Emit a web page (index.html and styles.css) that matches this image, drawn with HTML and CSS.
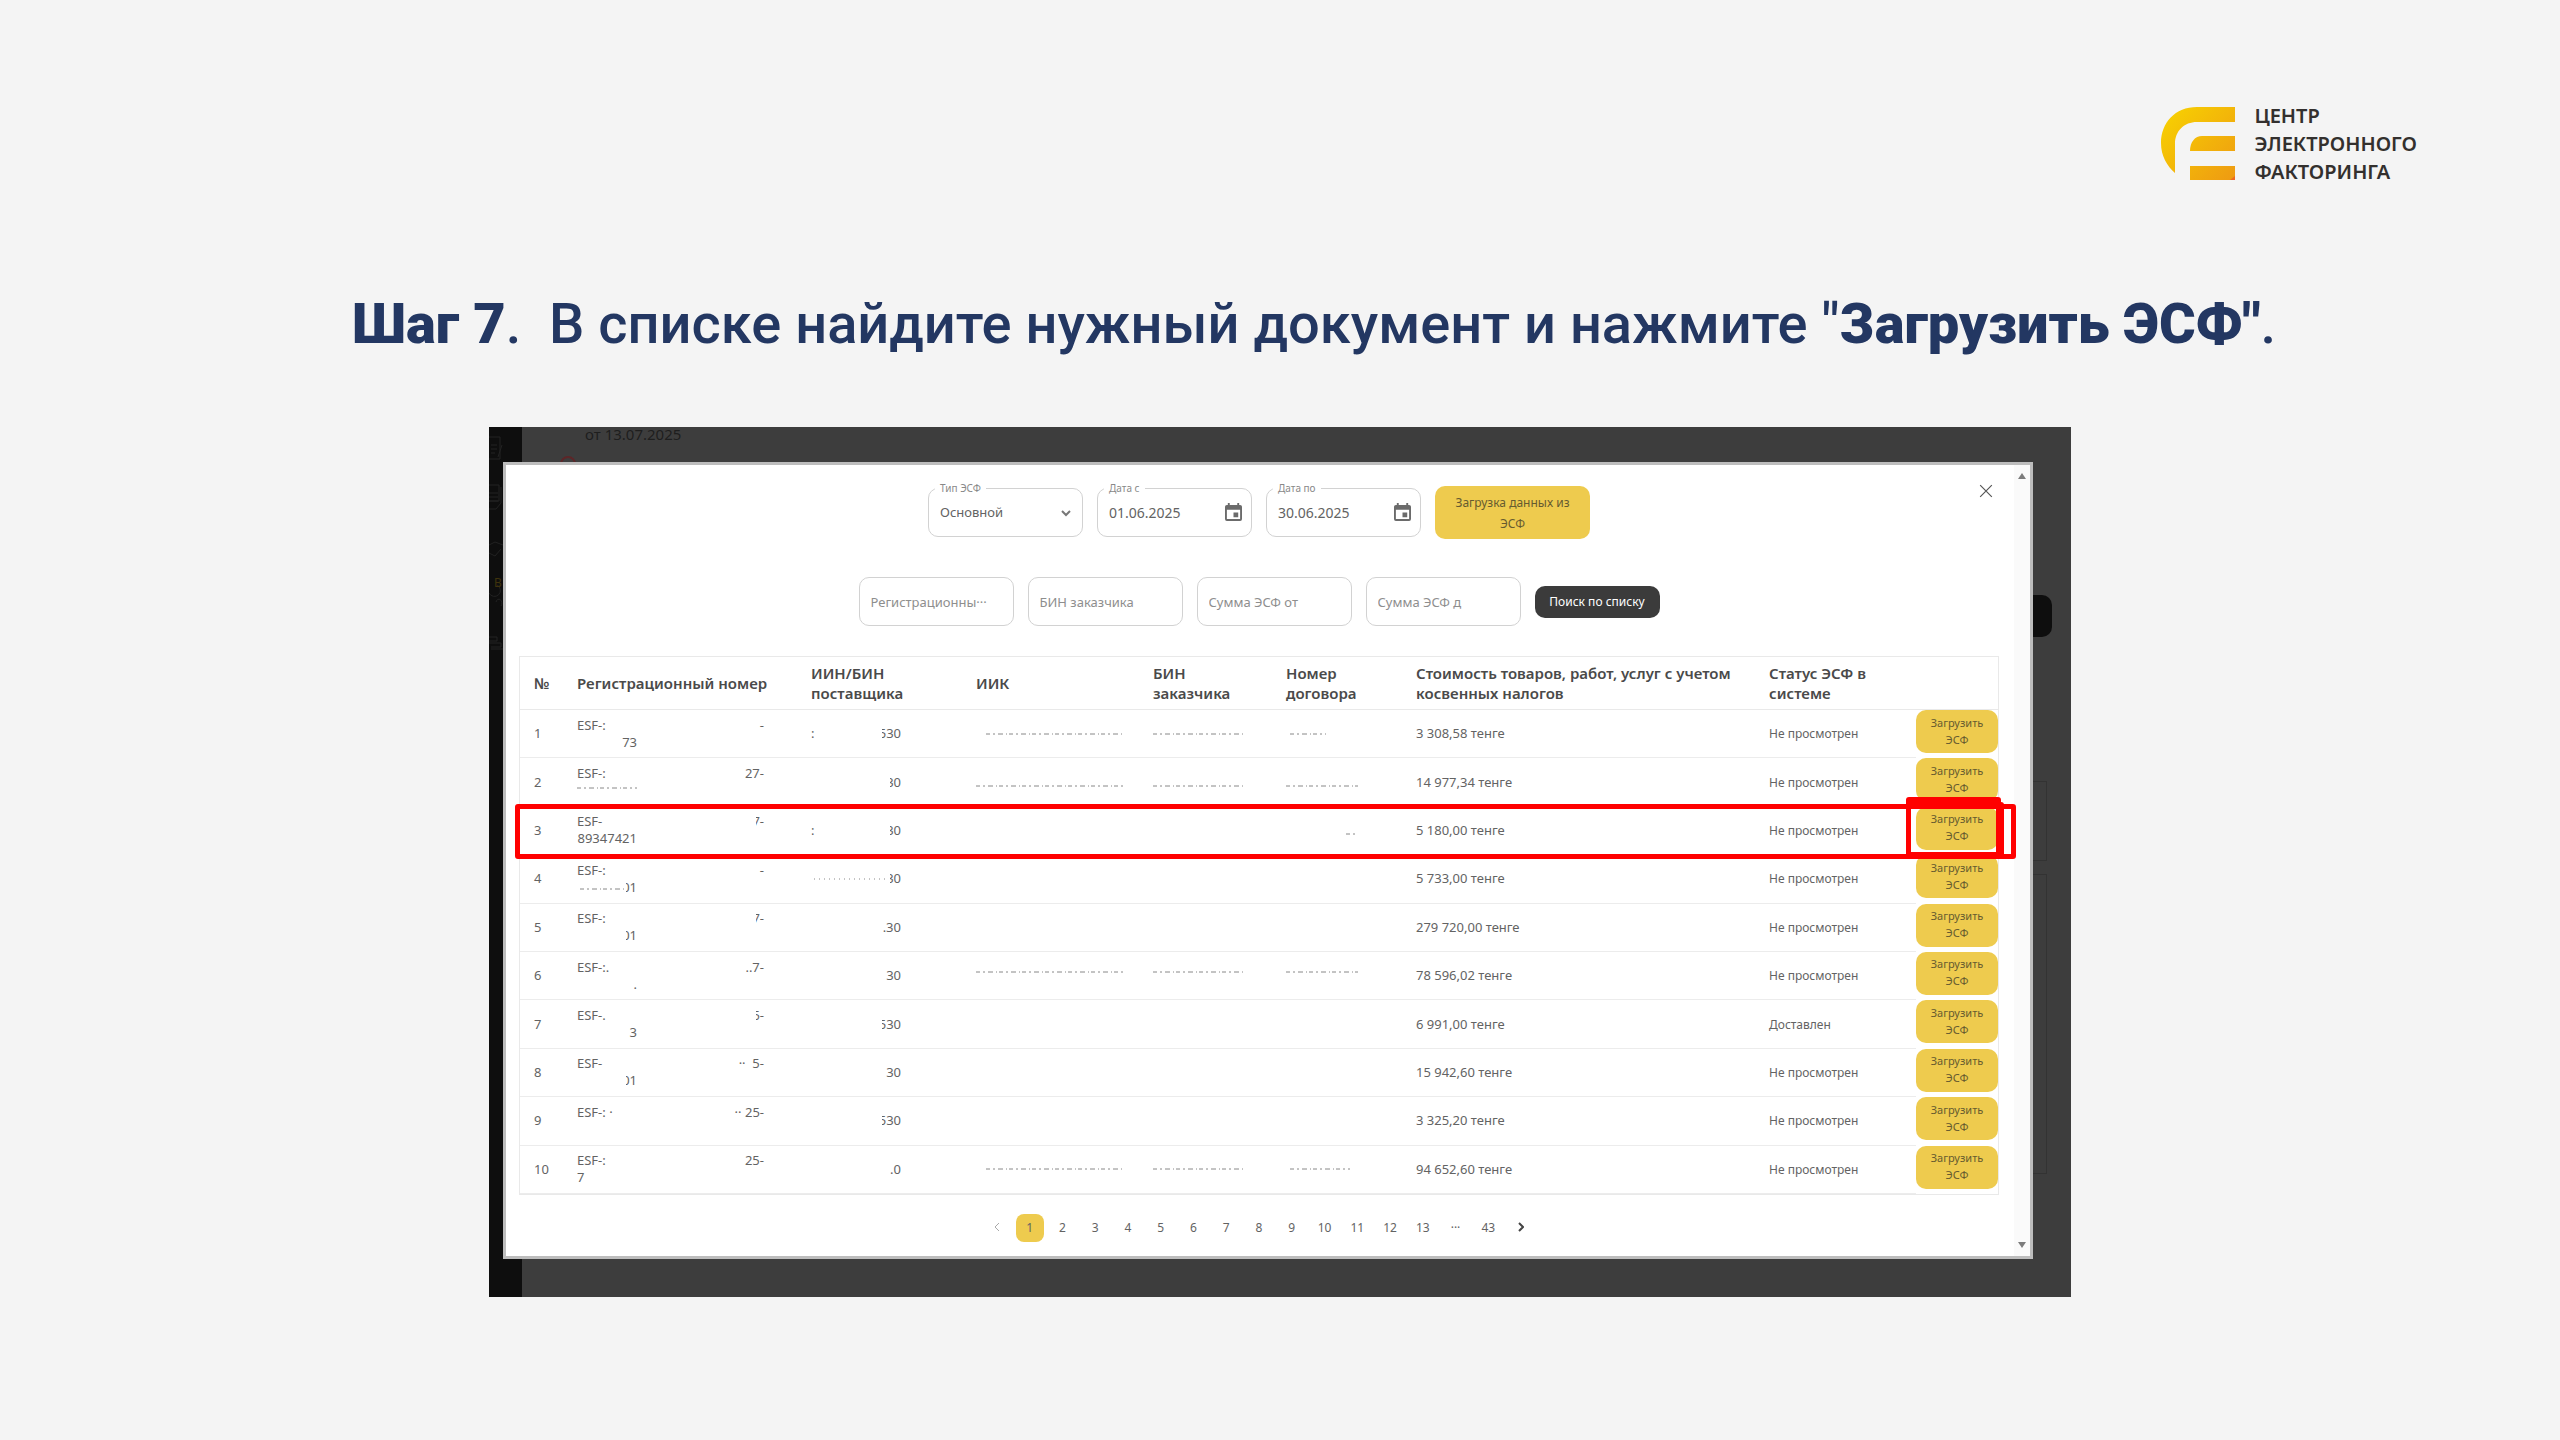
FILE: index.html
```
<!DOCTYPE html>
<html lang="ru">
<head>
<meta charset="utf-8">
<title>Шаг 7</title>
<link rel="stylesheet" href="styles.css">
</head>
<body>
<header class="brand">
  <svg class="brand-mark" viewBox="0 0 74 73" aria-hidden="true">
    <defs>
      <linearGradient id="gold" gradientUnits="userSpaceOnUse" x1="0" y1="0" x2="74" y2="73">
        <stop offset="0" stop-color="#f8d400"/><stop offset="1" stop-color="#ee9a12"/>
      </linearGradient>
    </defs>
    <g fill="url(#gold)">
      <path d="M74 0H36C14 0 0 16 0 36c0 13 6 23 14 30V37c0-13 9-22 22-22h38z"/>
      <path d="M74 29H41c-7 0-12 6-12 15h45z"/>
      <path d="M29 59h45v14H29z"/>
    </g>
    <path d="M74 69v4h-5z" fill="#ee6a22"/>
  </svg>
  <p class="brand-name">ЦЕНТР<br>ЭЛЕКТРОННОГО<br>ФАКТОРИНГА</p>
</header>

<main>
  <h1 class="title"><b>Шаг 7</b>.&nbsp; В списке найдите нужный документ и нажмите "<b>Загрузить ЭСФ"</b>.</h1>

  <section class="screen">
    <div class="backdrop" aria-hidden="true">
      <div class="backdrop-rail">
        <svg viewBox="0 0 14 240" fill="none" stroke="#222" stroke-width="1">
          <path d="M0 10h11v22H0M2 18h6M2 22h6M2 26h4M13 18l-4 12M0 58h10v16H0M0 66h9M0 70h9M0 74h9M12 60v16l-5 6H0M0 118l6-3 8 3M0 126l6 3 6-7M8 158a6 6 0 1 1-8 8M7 175a3 4 0 1 1 5 4M0 210h8v4H0M0 216h12v4H2M2 222h12"/>
        </svg>
        <span class="backdrop-badge">В</span>
      </div>
      <span class="backdrop-date">от 13.07.2025</span>
      <i class="backdrop-alert"></i>
      <i class="backdrop-button"></i>
      <i class="backdrop-box"></i>
      <i class="backdrop-box backdrop-box-tall"></i>
    </div>

    <div class="modal" role="dialog" aria-label="Список ЭСФ">
      <div class="modal-body">
        <button class="close" type="button" aria-label="Закрыть">
          <svg viewBox="0 0 12 12"><path d="M1 1l10 10M11 1L1 11"/></svg>
        </button>

        <form class="filters">
          <div class="field">
            <label for="type">Тип ЭСФ</label>
            <select id="type"><option>Основной</option></select>
            <svg class="chevron" viewBox="0 0 10 7"><path d="M1 1l4 4 4-4"/></svg>
          </div>
          <div class="field date">
            <label for="from">Дата с</label>
            <input id="from" type="text" value="01.06.2025">
            <svg class="calendar" viewBox="0 0 18 20"><path fill-rule="evenodd" d="M3 0h2v2h8V0h2v2h1a2 2 0 0 1 2 2v13a2 2 0 0 1-2 2H2a2 2 0 0 1-2-2V4a2 2 0 0 1 2-2h1zM2 7v10h14V7zM9 10h5v5H9z"/></svg>
          </div>
          <div class="field date">
            <label for="to">Дата по</label>
            <input id="to" type="text" value="30.06.2025">
            <svg class="calendar" viewBox="0 0 18 20"><path fill-rule="evenodd" d="M3 0h2v2h8V0h2v2h1a2 2 0 0 1 2 2v13a2 2 0 0 1-2 2H2a2 2 0 0 1-2-2V4a2 2 0 0 1 2-2h1zM2 7v10h14V7zM9 10h5v5H9z"/></svg>
          </div>
          <button class="load" type="button">Загрузка данных из ЭСФ</button>
        </form>

        <form class="filters filters-search">
          <div class="field"><input type="text" aria-label="Регистрационный номер" placeholder="Регистрационны···"></div>
          <div class="field"><input type="text" aria-label="БИН заказчика" placeholder="БИН заказчика"></div>
          <div class="field"><input type="text" aria-label="Сумма ЭСФ от" placeholder="Сумма ЭСФ от"></div>
          <div class="field"><input type="text" aria-label="Сумма ЭСФ до" placeholder="Сумма ЭСФ д"></div>
          <button class="search" type="button">Поиск по списку</button>
        </form>

        <table class="docs">
          <colgroup><col class="c-num"><col class="c-reg"><col class="c-iin"><col class="c-iik"><col class="c-bin"><col class="c-contract"><col class="c-sum"><col class="c-status"><col class="c-action"></colgroup>
          <thead>
            <tr><th>№</th><th>Регистрационный номер</th><th>ИИН/БИН<br>поставщика</th><th>ИИК</th><th>БИН<br>заказчика</th><th>Номер<br>договора</th><th>Стоимость товаров, работ, услуг с учетом<br>косвенных налогов</th><th>Статус ЭСФ в<br>системе</th><th></th></tr>
          </thead>
          <tbody>
            <tr><td>1</td><td><div class="reg"><span>ESF-:</span><span>-</span></div><div class="reg-tail">73</div></td><td><div class="iin"><span>:</span><span><i class="cut">5</i>30</span></div></td><td><svg class="trace trace-iik"><path d="M10 1H148"/></svg></td><td><svg class="trace"><path d="M0 1H90"/></svg></td><td><svg class="trace"><path d="M4 1H40"/></svg></td><td>3 308,58 тенге</td><td class="status">Не просмотрен</td><td><button type="button">Загрузить ЭСФ</button></td></tr>
            <tr><td>2</td><td><div class="reg"><span>ESF-:</span><span>27-</span></div><div class="reg-tail"><svg class="trace"><path d="M0 1H60"/></svg></div></td><td><div class="iin"><span></span><span><i class="cut">3</i>0</span></div></td><td><svg class="trace low trace-iik"><path d="M0 1H148"/></svg></td><td><svg class="trace low"><path d="M0 1H90"/></svg></td><td><svg class="trace low"><path d="M0 1H72"/></svg></td><td>14 977,34 тенге</td><td class="status">Не просмотрен</td><td><button type="button">Загрузить ЭСФ</button></td></tr>
            <tr class="marked"><td>3</td><td><div class="reg"><span>ESF-</span><span><i class="cut">7</i>-</span></div><div class="reg-tail">89347421</div></td><td><div class="iin"><span>:</span><span><i class="cut">3</i>0</span></div></td><td></td><td></td><td><svg class="trace low"><path d="M60 1H72"/></svg></td><td>5 180,00 тенге</td><td class="status">Не просмотрен</td><td><button type="button">Загрузить ЭСФ</button><i class="mark mark-row"></i><i class="mark mark-button"></i><i class="mark mark-button-inner"></i></td></tr>
            <tr><td>4</td><td><div class="reg"><span>ESF-:</span><span>-</span></div><div class="reg-tail"><svg class="trace low trace-short"><path d="M0 1H44"/></svg><i class="cut">0</i>1</div></td><td><div class="iin"><svg class="trace trace-thin"><path d="M3 1H74"/></svg><span><i class="cut">3</i>0</span></div></td><td></td><td></td><td></td><td>5 733,00 тенге</td><td class="status">Не просмотрен</td><td><button type="button">Загрузить ЭСФ</button></td></tr>
            <tr><td>5</td><td><div class="reg"><span>ESF-:</span><span><i class="cut">7</i>-</span></div><div class="reg-tail"><i class="cut">0</i>1</div></td><td><div class="iin"><span></span><span>.30</span></div></td><td></td><td></td><td></td><td>279 720,00 тенге</td><td class="status">Не просмотрен</td><td><button type="button">Загрузить ЭСФ</button></td></tr>
            <tr><td>6</td><td><div class="reg"><span>ESF-:.</span><span>..7-</span></div><div class="reg-tail">.</div></td><td><div class="iin"><span></span><span>30</span></div></td><td><svg class="trace high trace-iik"><path d="M0 1H148"/></svg></td><td><svg class="trace high"><path d="M0 1H90"/></svg></td><td><svg class="trace high"><path d="M0 1H72"/></svg></td><td>78 596,02 тенге</td><td class="status">Не просмотрен</td><td><button type="button">Загрузить ЭСФ</button></td></tr>
            <tr><td>7</td><td><div class="reg"><span>ESF-.</span><span><i class="cut">5</i>-</span></div><div class="reg-tail">3</div></td><td><div class="iin"><span></span><span><i class="cut">5</i>30</span></div></td><td></td><td></td><td></td><td>6 991,00 тенге</td><td class="status">Доставлен</td><td><button type="button">Загрузить ЭСФ</button></td></tr>
            <tr><td>8</td><td><div class="reg"><span>ESF-</span><span>·· &nbsp;5-</span></div><div class="reg-tail"><i class="cut">0</i>1</div></td><td><div class="iin"><span></span><span>30</span></div></td><td></td><td></td><td></td><td>15 942,60 тенге</td><td class="status">Не просмотрен</td><td><button type="button">Загрузить ЭСФ</button></td></tr>
            <tr><td>9</td><td><div class="reg"><span>ESF-:&nbsp;·</span><span>·· 25-</span></div><div class="reg-tail">&nbsp;</div></td><td><div class="iin"><span></span><span><i class="cut">5</i>30</span></div></td><td></td><td></td><td></td><td>3 325,20 тенге</td><td class="status">Не просмотрен</td><td><button type="button">Загрузить ЭСФ</button></td></tr>
            <tr><td>10</td><td><div class="reg"><span>ESF-:</span><span>25-</span></div><div>7</div></td><td><div class="iin"><span></span><span>.0</span></div></td><td><svg class="trace trace-iik"><path d="M10 1H148"/></svg></td><td><svg class="trace"><path d="M0 1H90"/></svg></td><td><svg class="trace"><path d="M4 1H64"/></svg></td><td>94 652,60 тенге</td><td class="status">Не просмотрен</td><td><button type="button">Загрузить ЭСФ</button></td></tr>
          </tbody>
        </table>

        <nav class="pager" aria-label="Страницы">
          <button type="button" class="arrow" disabled aria-label="Назад"><svg viewBox="0 0 6 10"><path d="M5 1L1 5l4 4"/></svg></button>
          <button type="button" class="current">1</button><button type="button">2</button><button type="button">3</button><button type="button">4</button><button type="button">5</button><button type="button">6</button><button type="button">7</button><button type="button">8</button><button type="button">9</button><button type="button">10</button><button type="button">11</button><button type="button">12</button><button type="button">13</button><span>···</span><button type="button">43</button>
          <button type="button" class="arrow" aria-label="Вперёд"><svg viewBox="0 0 6 10"><path d="M1 1l4 4-4 4"/></svg></button>
        </nav>
      </div>
      <div class="scrollbar" aria-hidden="true">
        <svg viewBox="0 0 8 6"><path d="M4 0l4 6H0z"/></svg>
        <svg viewBox="0 0 8 6"><path d="M4 6L0 0h8z"/></svg>
      </div>
    </div>
  </section>
</main>
</body>
</html>
```
FILE: styles.css
```
* { box-sizing: border-box; }

body {
  margin: 0;
  min-height: 100vh;
  background: #f4f4f4;
  color: #636363;
  font: 12px/17px "Noto Sans", "Open Sans", sans-serif;
}

button, input, select { font: inherit; color: inherit; }
button { border: 0; padding: 0; background: none; cursor: pointer; }
i { font-style: normal; }

/* Logo */
.brand {
  display: flex;
  justify-content: flex-end;
  gap: 19px;
  padding: 102px 143px 0 0;
}
.brand-mark { width: 74px; height: 73px; margin-top: 5px; }
.brand-name {
  margin: 0;
  color: #33302e;
  font: 600 20px/28px "Noto Sans", sans-serif;
}

/* Heading */
.title {
  margin: 105px 0 70px;
  padding-left: 68px;
  color: #233762;
  text-align: center;
  font: 500 56px/66px Roboto, sans-serif;
}
.title b { font-weight: 900; }

/* Application window */
.screen {
  position: relative;
  width: 62%;
  max-width: 1582px;
  margin: 0 auto;
  padding: 35px 38px 38px 14px;
  background: #3d3d3d;
}
.backdrop { position: absolute; inset: 0; overflow: hidden; }
.backdrop-rail { width: 33px; height: 100%; background: #0e0e0e; }
.backdrop-rail svg { width: 14px; height: 240px; }
.backdrop-badge { position: absolute; left: 5px; top: 147px; color: #3f330c; }
.backdrop-date { position: absolute; left: 96px; top: 0; color: #1e1e1e; font-size: 15px; line-height: 14px; }
.backdrop-alert { position: absolute; left: 71px; top: 29px; width: 16px; height: 16px; border: 2px solid #5d2628; border-radius: 50%; }
.backdrop-button { position: absolute; right: 19px; top: 168px; width: 40px; height: 42px; border-radius: 10px; background: #0e0e0e; }
.backdrop-box { position: absolute; right: 24px; top: 354px; width: 40px; height: 80px; border: 1px solid #333; }
.backdrop-box-tall { top: 447px; height: 300px; }

.modal {
  position: relative;
  display: flex;
  border: 3px solid #bdbdbd;
  background: #fff;
}
.modal-body { flex: 1; padding: 21px 15px 14px 13px; }
.scrollbar {
  display: flex;
  flex-direction: column;
  justify-content: space-between;
  align-items: center;
  width: 16px;
  padding: 8px 0;
  background: #fafafa;
}
.scrollbar svg { width: 8px; height: 6px; fill: #7c7c7c; }
.close { position: absolute; top: 19px; right: 37px; width: 14px; height: 14px; }
.close svg { display: block; width: 14px; height: 14px; fill: none; stroke: #555; stroke-width: 1; }

/* Filters */
.filters {
  display: flex;
  justify-content: center;
  align-items: center;
  gap: 14px;
  margin-bottom: 38px;
}
.filters-search { margin-bottom: 30px; }
.field {
  position: relative;
  width: 155px;
  height: 49px;
  border: 1px solid #d2d2d2;
  border-radius: 10px;
}
.field label {
  position: absolute;
  left: 6px;
  top: -9px;
  padding: 0 5px;
  background: #fff;
  color: #888;
  font-size: 10px;
  line-height: 17px;
}
.field input, .field select {
  width: 100%;
  height: 100%;
  padding: 0 11px;
  border: 0;
  border-radius: 10px;
  outline: 0;
  background: none;
  appearance: none;
  font-size: 13px;
}
.field.date input { font-size: 14px; }
.field input::placeholder { color: #8e8e8e; opacity: 1; }
.field svg { position: absolute; pointer-events: none; }
.chevron { right: 11px; top: 21px; width: 10px; height: 7px; fill: none; stroke: #777; stroke-width: 2; }
.calendar { right: 9px; top: 14px; width: 17px; height: 19px; fill: #6b6b6b; }
.load, .docs td button { border-radius: 10px; background: #eecb4e; color: #665b30; }
.load { width: 155px; height: 53px; padding: 0 14px; font-size: 12px; line-height: 21px; }
.search { width: 125px; height: 32px; border-radius: 10px; background: #3b3b3b; color: #fff; font-size: 12px; }

/* Document table */
.docs {
  width: 100%;
  height: 539px;
  table-layout: fixed;
  border-collapse: separate;
  border-spacing: 0;
  border: 1px solid #e9e9e9;
}
.c-num { width: 43px; }
.c-reg { width: 234px; }
.c-iin { width: 165px; }
.c-iik { width: 177px; }
.c-bin { width: 133px; }
.c-contract { width: 130px; }
.c-status { width: 161px; }
.c-action { width: 82px; }
.docs th, .docs td { padding: 0 0 0 14px; text-align: left; }
.docs th {
  height: 53px;
  border-bottom: 1px solid #e9e9e9;
  color: #4a4a4a;
  font-size: 15px;
  font-weight: 600;
  line-height: 20px;
  white-space: nowrap;
}
.docs td { border-bottom: 1px solid #ececec; font-size: 13px; }
.docs .status { font-size: 12px; }
.docs td:last-child { padding: 0; border: 0; vertical-align: top; }
.docs td button { display: block; width: 82px; height: 43px; padding: 0 12px 2px; font-size: 11px; }
.reg, .iin { display: flex; justify-content: space-between; }
.reg { width: 187px; }
.iin { width: 90px; }
.reg-tail { width: 60px; text-align: right; white-space: nowrap; }
.cut { display: inline-flex; justify-content: flex-end; width: 4px; overflow: hidden; vertical-align: bottom; }
.trace { display: block; width: 90px; height: 2px; fill: none; stroke: #888; stroke-width: 1; stroke-dasharray: 4 3 2 3 5 3 1 2; }
.trace-iik { width: 150px; }
.trace-thin { align-self: center; width: 76px; stroke-dasharray: 1 4; }
.reg-tail .trace { width: 60px; margin: 5px 0 10px; }
.reg-tail .trace-short { display: inline-block; width: 46px; margin: 0 0 2px; }
td > .low { margin-top: 8px; }
td > .high { margin-bottom: 8px; }

/* Red callouts */
.marked { position: relative; }
.mark { position: absolute; border: 5px solid #f00; border-radius: 3px; pointer-events: none; }
.mark-row { inset: -3px -18px -4px -5px; }
.mark-button { top: -10px; right: -3px; bottom: -3px; width: 95px; }
.mark-button-inner { top: -5px; right: -6px; bottom: -3px; width: 98px; border-width: 7px 8px 6px 5px; }

/* Pagination */
.pager {
  display: flex;
  justify-content: space-between;
  align-items: center;
  width: 552px;
  margin: 19px auto 0;
}
.pager button, .pager span { width: 28px; height: 28px; text-align: center; line-height: 28px; }
.pager .current { border-radius: 8px; background: #eecb4e; }
.pager svg { width: 6px; height: 10px; fill: none; stroke: #444; stroke-width: 2; }
.pager [disabled] svg { stroke: #aaa; stroke-width: 1; }
```
